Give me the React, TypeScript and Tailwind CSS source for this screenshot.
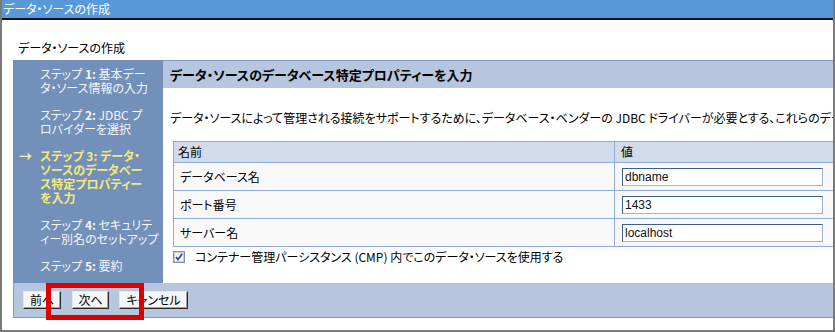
import React from "react";

const font = "font-['Noto_Sans_CJK_JP','Noto_Sans_CJK_SC',sans-serif] [font-feature-settings:'palt']";

function NavItem({ label, num, lines, active }: { label: string; num: string; lines: string[]; active?: boolean }) {
  return (
    <div className="flex">
      <div className={"w-[27px] shrink-0 text-[13px] leading-[14px] pl-[6px] " + (active ? "text-[#f4eea8] font-bold" : "")}>
        {active ? "→" : ""}
      </div>
      <div className={"text-[12px] leading-[14px] whitespace-nowrap " + (active ? "text-[#f6e97a] font-bold" : "text-[#f4f6fa]")}>
        {lines.map((l, i) => (
          <div key={i}>
            {i === 0 ? (
              <>
                {label} <span className="font-bold">{num}</span> {l}
              </>
            ) : (
              l
            )}
          </div>
        ))}
      </div>
    </div>
  );
}

function Row({ name, value }: { name: string; value: string }) {
  return (
    <div className="flex h-[28px] border-b border-[#8eaad8] bg-[#f8f8f8]">
      <div className="w-[441px] shrink-0 border-r border-[#8eaad8] pl-[6px] flex items-center text-[12px] text-black">
        {name}
      </div>
      <div className="flex-1 flex items-center pl-[7px]">
        <div className="w-[201px] h-[18px] bg-white border border-t-[#3f5f86] border-l-[#3f5f86] border-b-[#9db5d8] border-r-[#9db5d8] pl-[2px] flex items-center text-[12px] text-[#111] font-['Liberation_Sans',sans-serif]">
          {value}
        </div>
      </div>
    </div>
  );
}

function Btn({ children, w }: { children: React.ReactNode; w: string }) {
  return (
    <div
      className={
        w +
        " h-[18px] bg-[#f6f6f6] border border-t-[#e8e8e8] border-l-[#e8e8e8] border-b-[#2a2a2a] border-r-[#2a2a2a] shadow-[inset_-1px_-1px_0_#a0a0a0] flex items-center justify-center text-[12px] text-black"
      }
    >
      {children}
    </div>
  );
}

export default function App() {
  return (
    <div className={"w-[835px] h-[332px] bg-white border-l-2 border-r-2 border-b-2 border-[#7a7a7a] flex flex-col overflow-hidden " + font}>
      <div className="h-[20px] shrink-0 bg-[#5899da] border-b-2 border-[#141414] text-white text-[12px] leading-[18px] pl-[1px]">
        データ・ソースの作成
      </div>
      <div className="pl-[11px] flex flex-col flex-1">
        <div className="mt-[21px] pl-[5px] text-[12px] leading-[14px] text-black h-[19px]">データ・ソースの作成</div>
        <div className="flex h-[223px]">
          <div className="w-[150px] shrink-0 bg-[#7290b9] pt-[7px] flex flex-col gap-[13px]">
            <NavItem label="ステップ" num="1:" lines={["基本デー", "タ・ソース情報の入力"]} />
            <NavItem label="ステップ" num="2:" lines={["JDBC プ", "ロバイダーを選択"]} />
            <NavItem label="ステップ" num="3:" lines={["データ・", "ソースのデータベー", "ス特定プロパティー", "を入力"]} active />
            <NavItem label="ステップ" num="4:" lines={["セキュリテ", "ィー別名のセットアップ"]} />
            <NavItem label="ステップ" num="5:" lines={["要約"]} />
          </div>
          <div className="flex-1 flex flex-col overflow-hidden">
            <div className="h-[28px] shrink-0 bg-[#b5c6de] border-t border-[#7f99c2] pl-[7px] flex items-center text-[13px] font-bold text-black whitespace-nowrap">
              データ・ソースのデータベース特定プロパティーを入力
            </div>
            <div className="mt-[23px] pl-[7px] text-[12px] leading-[14px] text-black whitespace-nowrap">
              データ・ソースによって管理される接続をサポートするために、データベース・ベンダーの JDBC ドライバーが必要とする、これらのデータベース特定プロパティーを入力してください。
            </div>
            <div className="mt-[16px] ml-[10px] w-[700px] border-t border-l border-[#8eaad8]">
              <div className="flex h-[21px] border-b border-[#8eaad8] bg-[#d2dbea]">
                <div className="w-[441px] shrink-0 border-r border-[#8eaad8] pl-[4px] flex items-center text-[12px] text-black">名前</div>
                <div className="flex-1 pl-[6px] flex items-center text-[12px] text-black">値</div>
              </div>
              <Row name="データベース名" value="dbname" />
              <Row name="ポート番号" value="1433" />
              <Row name="サーバー名" value="localhost" />
            </div>
            <div className="mt-[3px] ml-[10px] flex items-center h-[14px]">
              <svg width="12" height="12" viewBox="0 0 12 12" className="shrink-0">
                <rect x="0.5" y="0.5" width="11" height="11" fill="#e6e8ee" stroke="#8a8e98" />
                <rect x="1.5" y="1.5" width="9" height="9" fill="#f4f5f8" stroke="#c8ccd6" />
                <path d="M3 6 L5 8.5 L9.2 2.8" fill="none" stroke="#2f4fa8" strokeWidth="1.8" />
              </svg>
              <span className="ml-[10px] text-[12px] text-black whitespace-nowrap">
                コンテナー管理パーシスタンス (CMP) 内でこのデータ・ソースを使用する
              </span>
            </div>
          </div>
        </div>
        <div className="relative h-[35px] bg-[#b5c6de] border-l border-b border-[#7f99c2] flex items-center pl-[9px]">
          <Btn w="w-[38px]">前へ</Btn>
          <div className="w-[11px]" />
          <Btn w="w-[37px]">次へ</Btn>
          <div className="w-[10px]" />
          <Btn w="w-[69px]">キャンセル</Btn>
          <div className="absolute left-[32px] top-[0px] w-[98px] h-[37px] border-[5px] border-[#dc0000]" />
        </div>
      </div>
    </div>
  );
}
